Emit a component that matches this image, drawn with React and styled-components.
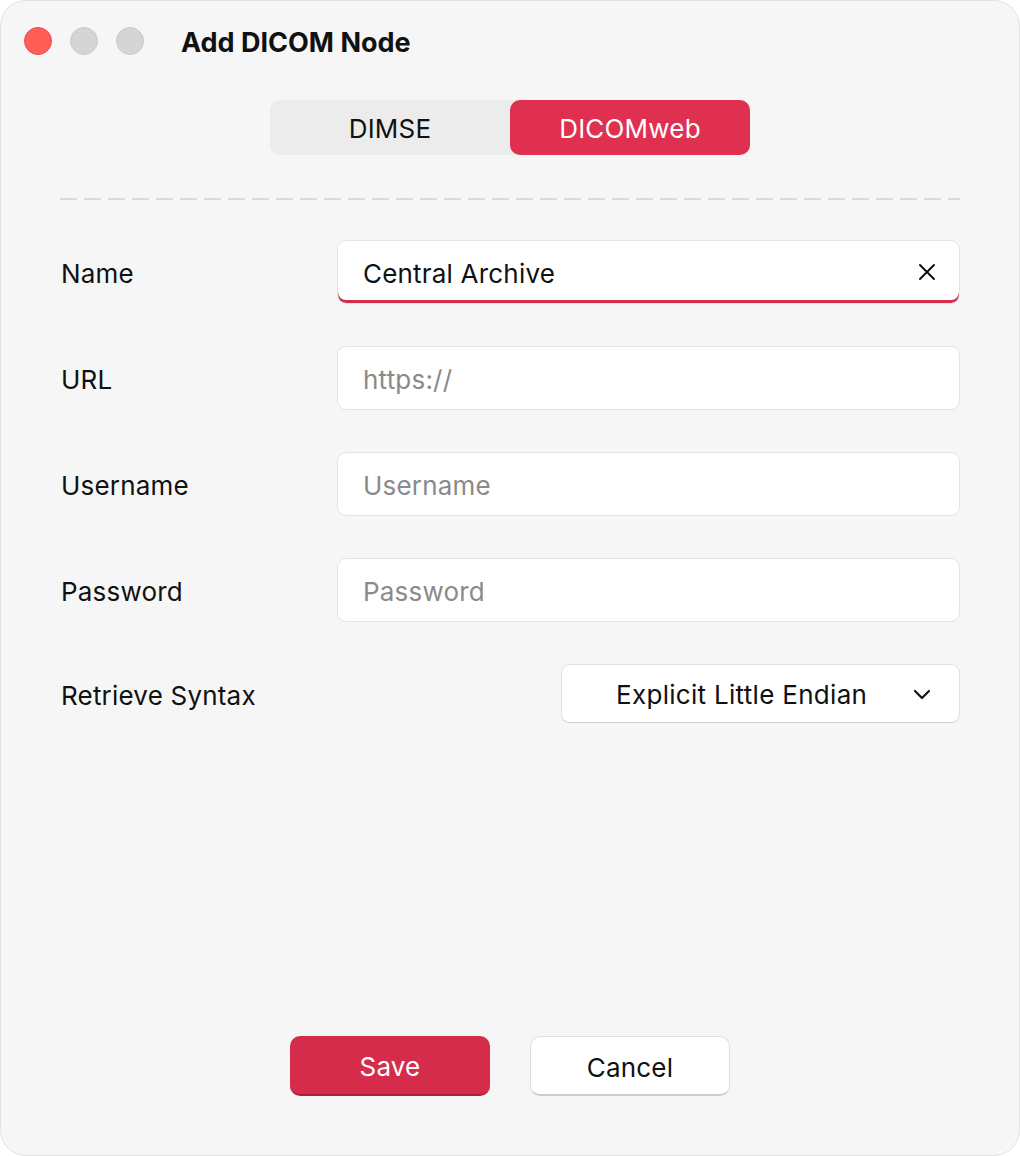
import React, { useState } from "react";
import styled, { createGlobalStyle } from "styled-components";

const GlobalStyle = createGlobalStyle`
  html, body {
    margin: 0;
    padding: 0;
    background: #ffffff;
  }
  body {
    font-family: Inter, "Liberation Sans", sans-serif;
    -webkit-font-smoothing: antialiased;
  }
`;

const Window = styled.div`
  box-sizing: border-box;
  width: 1020px;
  height: 1156px;
  background: #f6f6f6;
  border: 1px solid #e2e2e2;
  border-radius: 26px;
  display: flex;
  flex-direction: column;
  overflow: hidden;
`;

const TitleBar = styled.div`
  height: 80px;
  display: flex;
  align-items: center;
  padding-left: 23px;
  gap: 18px;
`;

const Light = styled.span`
  width: 28px;
  height: 28px;
  border-radius: 50%;
  box-sizing: border-box;
  background: ${(p) => (p.$red ? "#ff5f57" : "#d5d5d5")};
  border: 1px solid ${(p) => (p.$red ? "#e94b43" : "#c9c9c9")};
`;

const Title = styled.h1`
  margin: 2px 0 0 19px;
  font-size: 27px;
  font-weight: 700;
  color: #111;
`;

const Segments = styled.div`
  align-self: center;
  margin-top: 19px;
  display: flex;
  width: 480px;
  height: 55px;
  background: #ececec;
  border-radius: 10px;
`;

const Segment = styled.button`
  flex: 1;
  border: none;
  border-radius: 10px;
  padding: 2px 0 0;
  font-family: inherit;
  font-size: 26px;
  letter-spacing: 0.2px;
  cursor: pointer;
  background: ${(p) => (p.$active ? "#e0304f" : "transparent")};
  color: ${(p) => (p.$active ? "#ffffff" : "#111")};
`;

const Divider = styled.hr`
  margin: 43px 59px 0;
  height: 2px;
  border: none;
  background-image: linear-gradient(to right, #dadada 17px, transparent 17px);
  background-size: 24px 2px;
  background-repeat: repeat-x;
`;

const Form = styled.div`
  margin: 40px 59px 0;
  display: grid;
  grid-template-columns: 277px 1fr;
  row-gap: 42px;
  align-items: center;
`;

const Label = styled.label`
  font-size: 26px;
  color: #111;
  letter-spacing: 0.2px;
  padding: 3px 0 0 1px;
`;

const Field = styled.div`
  height: 64px;
  box-sizing: border-box;
  background: #fff;
  border: 1px solid #e4e4e4;
  border-radius: 9px;
  display: flex;
  align-items: center;
  box-shadow: ${(p) => (p.$focused ? "inset 0 -3px 0 #d42c4a" : "none")};
`;

const TextInput = styled.input`
  flex: 1;
  min-width: 0;
  height: 100%;
  border: none;
  background: transparent;
  outline: none;
  padding: 3px 0 0 25px;
  font-family: inherit;
  font-size: 26px;
  letter-spacing: 0.2px;
  color: #111;

  &::placeholder {
    color: #8a8a8a;
  }
`;

const ClearButton = styled.button`
  border: none;
  background: none;
  padding: 0;
  margin-right: 22px;
  width: 20px;
  height: 20px;
  display: flex;
  align-items: center;
  justify-content: center;
  cursor: pointer;
`;

const SelectBox = styled.button`
  justify-self: end;
  width: 399px;
  height: 59px;
  box-sizing: border-box;
  background: #fff;
  border: 1px solid #e0e0e0;
  border-bottom-color: #cfcfcf;
  border-radius: 9px;
  display: flex;
  align-items: center;
  padding: 2px 28px 0 54px;
  font-family: inherit;
  font-size: 26px;
  letter-spacing: 0.3px;
  color: #111;
  cursor: pointer;

  span {
    flex: 1;
    text-align: left;
  }
`;

const Spacer = styled.div`
  flex: 1;
`;

const Footer = styled.div`
  display: flex;
  justify-content: center;
  gap: 40px;
  margin-bottom: 59px;
`;

const Button = styled.button`
  width: 200px;
  height: 60px;
  box-sizing: border-box;
  border-radius: 10px;
  padding: 3px 0 0;
  font-family: inherit;
  font-size: 26px;
  letter-spacing: 0.2px;
  cursor: pointer;
  background: ${(p) => (p.$primary ? "#d42c4a" : "#ffffff")};
  color: ${(p) => (p.$primary ? "#ffffff" : "#111")};
  border: ${(p) => (p.$primary ? "none" : "1px solid #dedede")};
  border-bottom: ${(p) =>
    p.$primary ? "2px solid #a9213b" : "2px solid #cdcdcd"};
`;

const XIcon = () => (
  <svg width="18" height="18" viewBox="0 0 18 18">
    <path d="M2 2 L16 16 M16 2 L2 16" stroke="#111" strokeWidth="2" strokeLinecap="round" />
  </svg>
);

const Chevron = () => (
  <svg width="18" height="11" viewBox="0 0 18 11">
    <path d="M2 2 L9 9 L16 2" stroke="#111" strokeWidth="2.2" fill="none" strokeLinecap="round" strokeLinejoin="round" />
  </svg>
);

const App = () => {
  const [mode, setMode] = useState("DICOMweb");
  const [name, setName] = useState("Central Archive");

  return (
    <>
      <GlobalStyle />
      <Window>
        <TitleBar>
          <Light $red />
          <Light />
          <Light />
          <Title>Add DICOM Node</Title>
        </TitleBar>
        <Segments>
          {["DIMSE", "DICOMweb"].map((m) => (
            <Segment key={m} $active={mode === m} onClick={() => setMode(m)}>
              {m}
            </Segment>
          ))}
        </Segments>
        <Divider />
        <Form>
          <Label>Name</Label>
          <Field $focused>
            <TextInput value={name} onChange={(e) => setName(e.target.value)} />
            <ClearButton onClick={() => setName("")}>
              <XIcon />
            </ClearButton>
          </Field>

          <Label>URL</Label>
          <Field>
            <TextInput placeholder="https://" />
          </Field>

          <Label>Username</Label>
          <Field>
            <TextInput placeholder="Username" />
          </Field>

          <Label>Password</Label>
          <Field>
            <TextInput type="password" placeholder="Password" />
          </Field>

          <Label>Retrieve Syntax</Label>
          <SelectBox>
            <span>Explicit Little Endian</span>
            <Chevron />
          </SelectBox>
        </Form>
        <Spacer />
        <Footer>
          <Button $primary>Save</Button>
          <Button>Cancel</Button>
        </Footer>
      </Window>
    </>
  );
};

export default App;
